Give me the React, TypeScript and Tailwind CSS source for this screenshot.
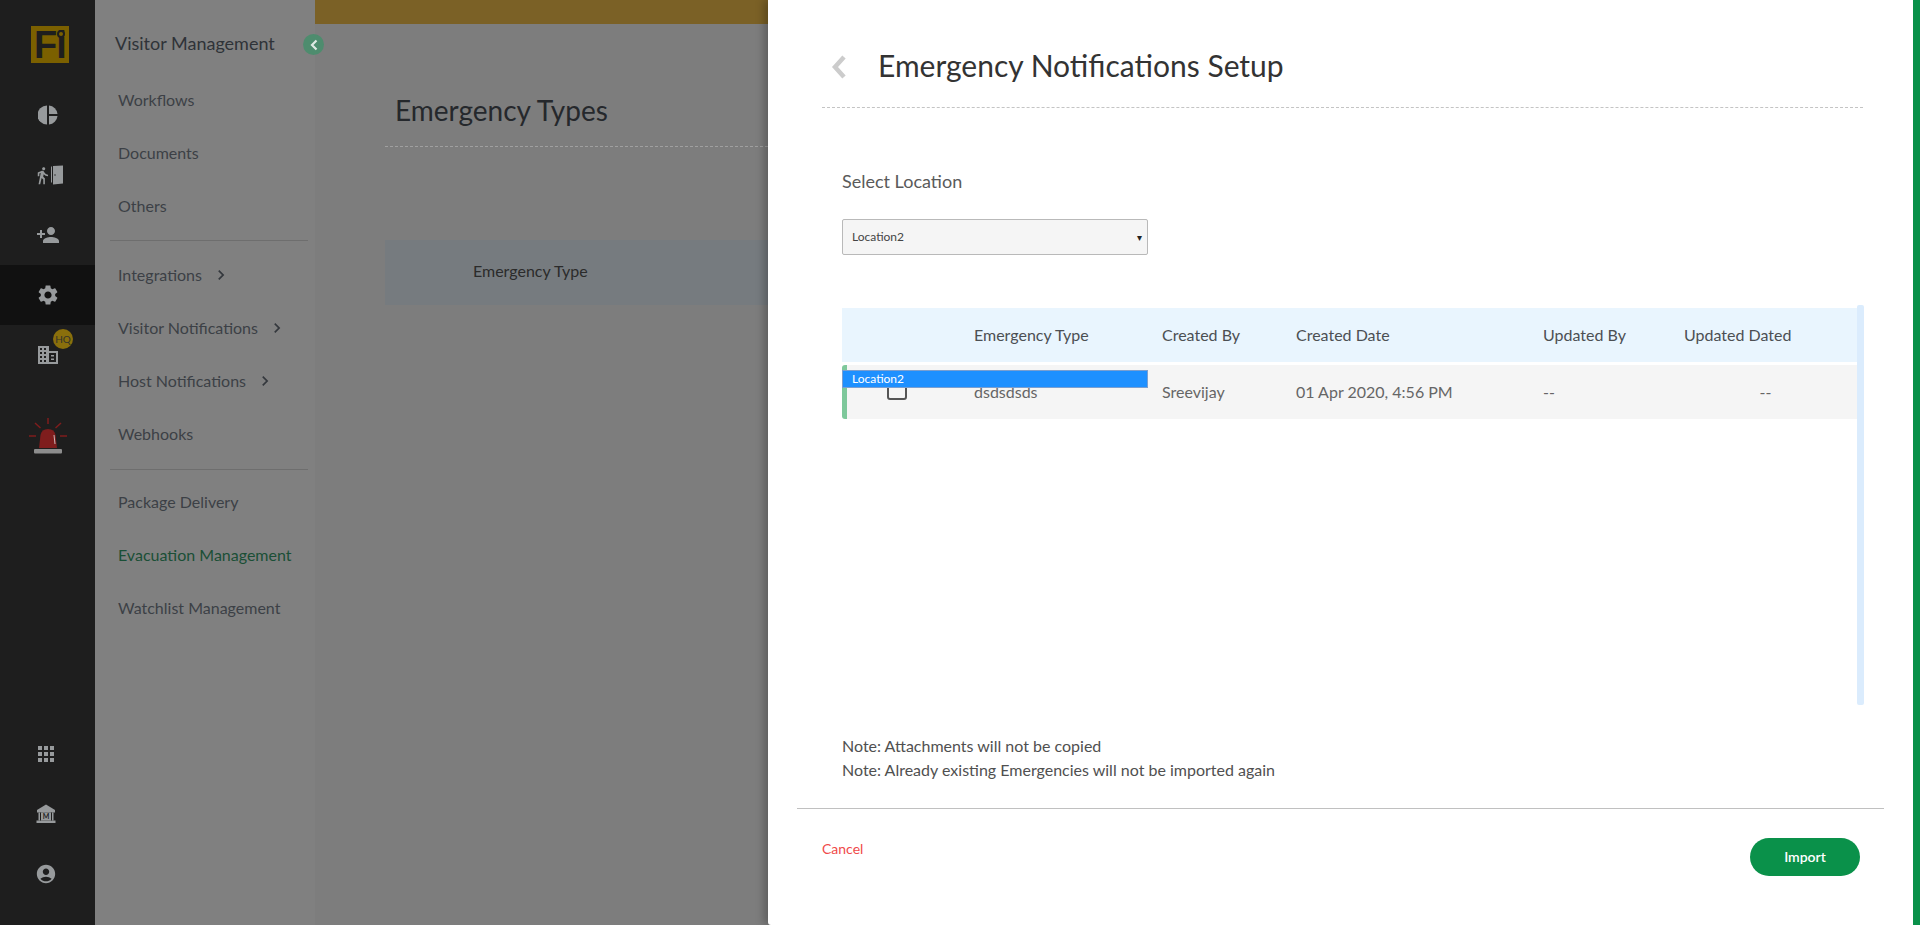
import React from "react";
import { MdSettings, MdPersonAdd, MdApps, MdAccountCircle, MdDirectionsWalk, MdChevronRight } from "react-icons/md";

const ic = "#979a9c";

const Pie = () => (
  <svg width="20" height="20" viewBox="0 0 20 20">
    <path d="M9 0.5a9.5 9.5 0 0 0 0 19z" fill={ic} />
    <path d="M11 0.5a9.5 9.5 0 0 1 8.5 8.5H11z" fill={ic} />
    <path d="M11 11h8.5A9.5 9.5 0 0 1 11 19.5z" fill={ic} />
  </svg>
);

const Door = () => (
  <div className="flex items-end">
    <MdDirectionsWalk size={19} color={ic} className="-mr-[2px]" />
    <svg width="13" height="20" viewBox="0 0 13 20">
      <path d="M1 1.500h1v16H1z" fill={ic} />
      <path d="M3 1l10 -0.500v18l-10 1z" fill={ic} />
      <circle cx="5" cy="10" r="0.700" fill="#1e1e1e" />
    </svg>
  </div>
);

const Building = () => (
  <svg width="20" height="18" viewBox="0 0 20 18">
    <path d="M0 0h11v5h9v13H0z" fill={ic} />
    <g fill="#1e1e1e">
      <rect x="2" y="2" width="2" height="2" /><rect x="6" y="2" width="2" height="2" />
      <rect x="2" y="6" width="2" height="2" /><rect x="6" y="6" width="2" height="2" />
      <rect x="2" y="10" width="2" height="2" /><rect x="6" y="10" width="2" height="2" />
      <rect x="2" y="14" width="2" height="2" /><rect x="6" y="14" width="2" height="2" />
      <rect x="11" y="7" width="7" height="9" />
    </g>
    <g fill={ic}>
      <rect x="13" y="9" width="3" height="1.500" /><rect x="13" y="12.500" width="3" height="1.500" />
    </g>
  </svg>
);

const Siren = () => (
  <svg width="40" height="38" viewBox="0 0 40 38">
    <g stroke="#7f1d1d" strokeWidth="1.500" fill="none">
      <path d="M20 1v6" /><path d="M7 6l5.500 5" /><path d="M33 6l-5.500 5" /><path d="M1 19h7" /><path d="M32 19h7" />
    </g>
    <path d="M11 31l1.500-13q1-6 7.500-6t7.500 6l1.500 13z" fill="#7f1d1d" />
    <path d="M26 18l1 9" stroke="#c9b5b5" strokeWidth="1" />
    <rect x="6" y="32" width="28" height="4.500" rx="1" fill="#8d8d8d" />
  </svg>
);

const Bank = () => (
  <svg width="20" height="20" viewBox="0 0 20 20">
    <path d="M10 0.500L19 6v2.500H1V6z" fill={ic} />
    <path d="M2.500 8.500h15v8h-15z" fill={ic} />
    <rect x="0.500" y="16.500" width="19" height="2.500" fill={ic} />
    <rect x="4" y="8.500" width="1" height="8" fill="#1e1e1e" />
    <rect x="15" y="8.500" width="1" height="8" fill="#1e1e1e" />
    <text x="10" y="15" textAnchor="middle" fontSize="7" fontWeight="700" fontFamily="Lato" fill="#1e1e1e">M</text>
  </svg>
);

const RailItem = ({ children, active = false }: { children: React.ReactNode; active?: boolean }) => (
  <div className={`relative flex h-[60px] items-center justify-center ${active ? "bg-[#111111]" : ""}`}>{children}</div>
);

const SideItem = ({ label, arrow = false, green = false }: { label: string; arrow?: boolean; green?: boolean }) => (
  <div className={`flex h-[53px] items-center pl-[8px] text-[16px] ${green ? "text-[#1a4f36]" : "text-[#3c4046]"}`}>
    <span>{label}</span>
    {arrow && <MdChevronRight size={20} className="ml-[9px] text-[#34383d]" />}
  </div>
);

const cols = "grid grid-cols-[126px_188px_134px_247px_141px_178px]";
const cell = "flex items-center pl-[6px]";

export default function App() {
  return (
    <div className="relative flex h-[925px] w-[1920px] overflow-hidden font-['Lato',sans-serif]">
      <aside className="flex w-[95px] shrink-0 flex-col justify-between bg-[#1e1e1e]">
        <div>
          <div className="mb-[22px] ml-[31px] mt-[26px]">
            <div className="relative flex h-[37px] w-[38px] items-center justify-center bg-[#7b6000] font-['Liberation_Sans',sans-serif] text-[38px] font-bold leading-none tracking-[-1px] text-[#1e1e1e]">
              Fi
              <span className="absolute right-[4px] top-[4px] h-[8px] w-[8px] rounded-full border-2 border-[#1e1e1e] bg-[#7b6000]" />
            </div>
          </div>
          <RailItem><Pie /></RailItem>
          <RailItem><Door /></RailItem>
          <RailItem><MdPersonAdd size={24} color={ic} /></RailItem>
          <RailItem active><MdSettings size={24} color={ic} /></RailItem>
          <RailItem>
            <Building />
            <span className="absolute left-[53px] top-[4px] flex h-[20px] w-[20px] items-center justify-center rounded-full bg-[#8a6f0c] text-[10px] text-[#33332a]">HQ</span>
          </RailItem>
          <div className="mt-[21px]"><RailItem><Siren /></RailItem></div>
        </div>
        <div className="pb-[22px] pr-[3px]">
          <RailItem><MdApps size={24} color={ic} /></RailItem>
          <RailItem><Bank /></RailItem>
          <div className="flex h-[59px] items-center justify-center"><MdAccountCircle size={22} color={ic} /></div>
        </div>
      </aside>

      <nav className="relative w-[220px] shrink-0 bg-[#808080] pl-[15px] pr-[7px]">
        <div className="flex h-[73px] items-start pl-[5px] pt-[31px] text-[18px] leading-[24px] text-[#2f3338]">Visitor Management</div>
        <span className="absolute left-[208px] top-[34px] z-10 flex h-[21px] w-[21px] items-center justify-center rounded-full bg-[#4e8c6e]">
          <svg width="10" height="12" viewBox="0 0 10 12"><path d="M7.500 1.500L3 6l4.500 4.500" fill="none" stroke="#dfe9e3" strokeWidth="2.200" /></svg>
        </span>
        <SideItem label="Workflows" />
        <SideItem label="Documents" />
        <SideItem label="Others" />
        <div className="mb-[7px] mt-[8px] h-px bg-[#6e6e6e]" />
        <SideItem label="Integrations" arrow />
        <SideItem label="Visitor Notifications" arrow />
        <SideItem label="Host Notifications" arrow />
        <SideItem label="Webhooks" />
        <div className="mb-[5px] mt-[9px] h-px bg-[#6e6e6e]" />
        <SideItem label="Package Delivery" />
        <SideItem label="Evacuation Management" green />
        <SideItem label="Watchlist Management" />
      </nav>

      <main className="flex-1 bg-[#7d7d7d]">
        <div className="h-[24px] w-[453px] bg-[#7b6126]" />
        <div className="w-[453px] pl-[70px]">
          <h2 className="flex h-[122px] items-end pb-[22px] pl-[10px] text-[28px] font-normal leading-none text-[#25282c]">Emergency Types</h2>
          <div className="border-t border-dashed border-[#a0a0a0]" />
          <div className="mt-[93px] flex h-[65px] items-center bg-[#767b7f] pb-[4px] pl-[88px] text-[16px] text-[#2b2b2b]">Emergency Type</div>
        </div>
      </main>

      <section className="absolute inset-y-0 left-[768px] right-0 flex flex-col rounded-bl-[3px] border-r-[7px] border-[#0a914a] bg-white pl-[29px] pr-[29px] shadow-[-4px_0_8px_rgba(0,0,0,0.25)]">
        <div className="ml-[25px] mr-[21px] flex h-[108px] items-start border-b border-dashed border-[#c4c4c4] pt-[48px]">
          <svg width="18" height="26" viewBox="0 0 18 26" className="ml-[8px] mt-[6px]">
            <path d="M14 3L5 13l9 10" fill="none" stroke="#cccccc" strokeWidth="4.500" />
          </svg>
          <h1 className="ml-[30px] text-[30px] font-normal leading-[34px] text-[#333333]">Emergency Notifications Setup</h1>
        </div>

        <div className="ml-[45px] mr-[20px] flex-1">
          <div className="mt-[61px] text-[18px] leading-[24px] text-[#5a5a5a]">Select Location</div>
          <div className="mt-[26px] flex h-[36px] w-[306px] items-center justify-between rounded-[2px] border border-[#b9b9b9] bg-[#f5f5f5] pl-[9px] pr-[5px] text-[12px] text-[#444444]">
            <span>Location2</span>
            <span className="text-[10px] text-[#222222]">▾</span>
          </div>

          <div className="relative mt-[50px] h-[400px] pr-[7px]">
            <div className="absolute right-0 top-0 h-[400px] w-[7px] rounded-[2px] bg-[#dbecfd]" />
            <div className={`${cols} h-[54px] translate-y-[3px] bg-[#e9f5fe] text-[16px] text-[#4c4f53]`}>
              <div className={cell} />
              <div className={cell}>Emergency Type</div>
              <div className={cell}>Created By</div>
              <div className={cell}>Created Date</div>
              <div className={cell}>Updated By</div>
              <div className={cell}>Updated Dated</div>
            </div>
            <div className={`${cols} relative mt-[6px] h-[54px] rounded-l-[3px] border-l-[5px] border-[#7ec89b] bg-[#f5f5f5] text-[16px] text-[#666666]`}>
              <div className="flex items-center justify-center pr-[26px]">
                <span className="-mt-[5px] h-[20px] w-[20px] rounded-[3px] border-2 border-[#555555]" />
              </div>
              <div className={`${cell} -ml-[5px]`}>dsdsdsds</div>
              <div className={`${cell} -ml-[5px]`}>Sreevijay</div>
              <div className={`${cell} -ml-[5px]`}>01 Apr 2020, 4:56 PM</div>
              <div className={`${cell} -ml-[5px]`}>--</div>
              <div className="-ml-[5px] flex items-center justify-center pr-[8px]">--</div>
              <div className="absolute -left-[5px] top-[5px] flex h-[18px] w-[306px] items-center border border-[#7b9fd0] bg-[#1e90ff] pl-[9px] text-[12px] text-white">Location2</div>
            </div>
          </div>

          <div className="mt-[29px] text-[16px] leading-[24px] text-[#505050]">
            <p>Note: Attachments will not be copied</p>
            <p>Note: Already existing Emergencies will not be imported again</p>
          </div>
        </div>

        <div className="flex h-[117px] items-start justify-between border-t border-[#c0c0c0] pl-[25px] pr-[24px]">
          <span className="mt-[30px] text-[14px] leading-[20px] text-[#f04a4a]">Cancel</span>
          <button className="mt-[29px] h-[38px] w-[110px] rounded-full bg-[#0a914a] pb-[2px] text-[14px] font-semibold text-white">Import</button>
        </div>
      </section>
    </div>
  );
}
